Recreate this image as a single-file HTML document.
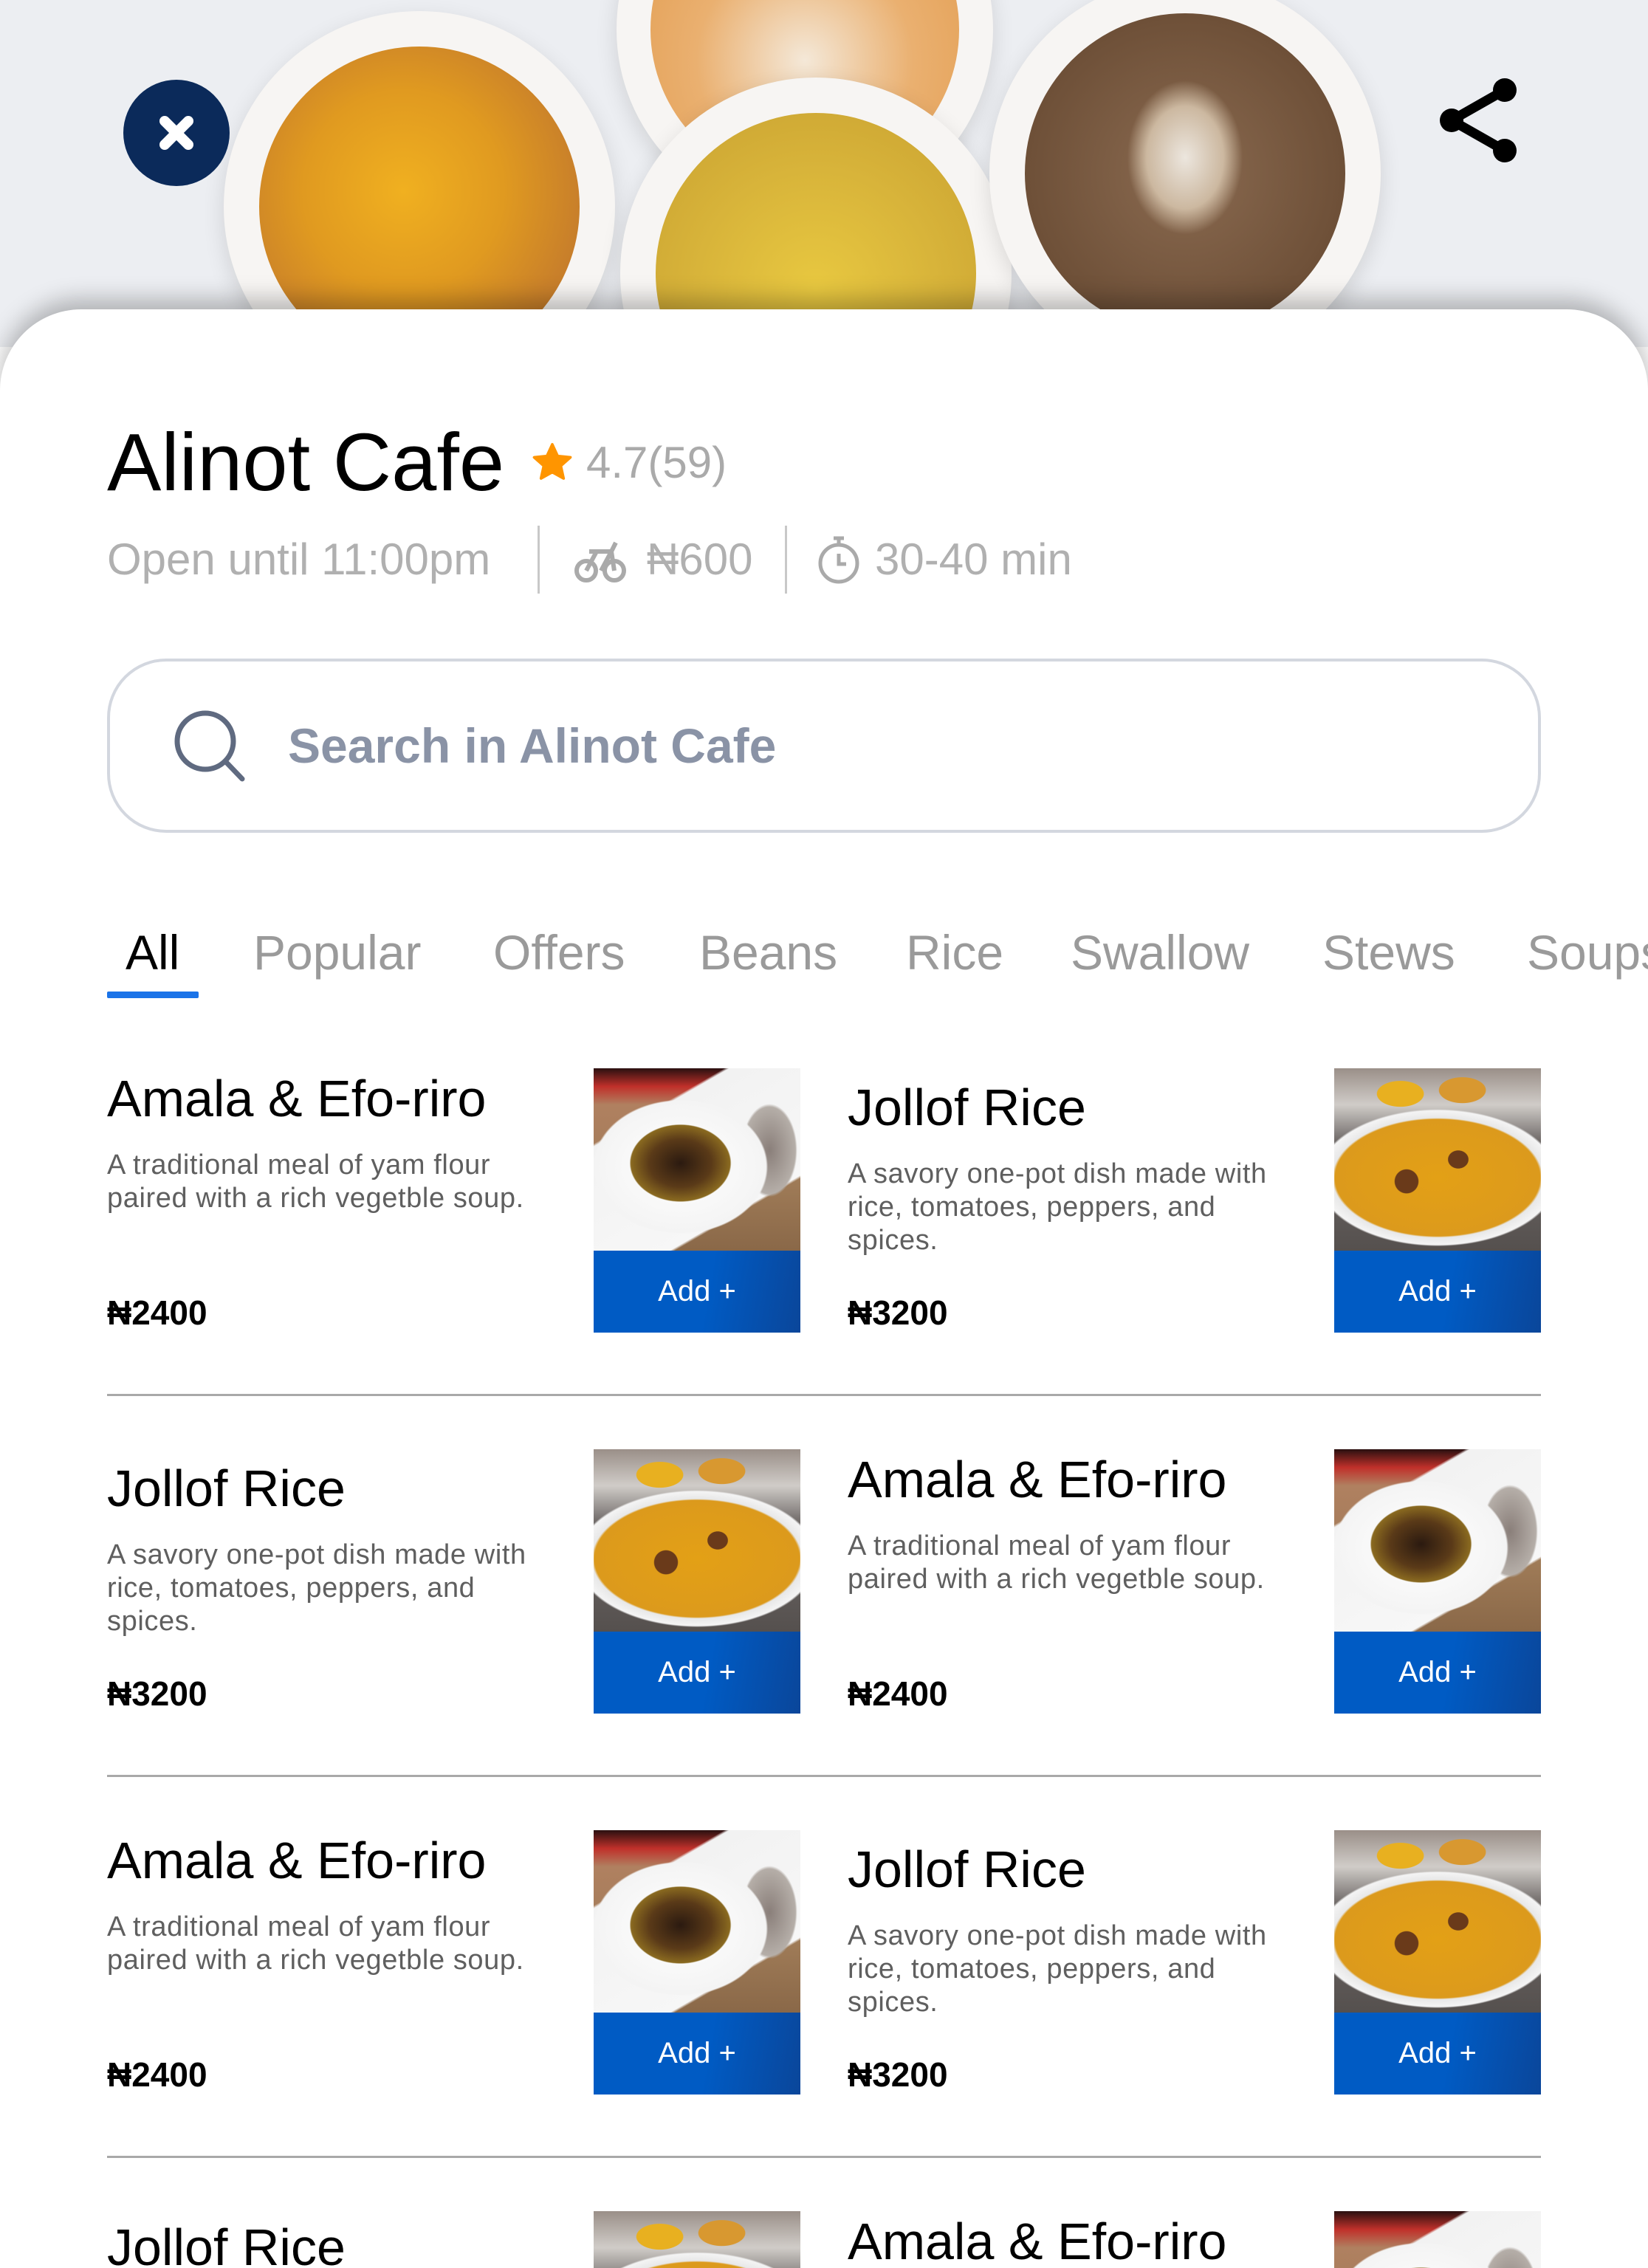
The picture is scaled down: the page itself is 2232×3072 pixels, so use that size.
<!DOCTYPE html>
<html style="overflow:hidden;height:3072px"><head><meta charset="utf-8"><style>
*{margin:0;padding:0;box-sizing:border-box}
html,body{width:2232px;height:3072px;overflow:hidden}
body{background:#fff;font-family:"Liberation Sans",sans-serif;position:relative}
#wrap{position:absolute;left:0;top:0;width:2232px;height:3072px;overflow:hidden}
.hero{position:absolute;left:0;top:0;width:2232px;height:470px;background:#eceef2;overflow:hidden}
.bowl{position:absolute;border-radius:50%;background:#f7f5f3;box-shadow:0 10px 30px rgba(0,0,0,.12)}
.bowl i{position:absolute;left:9%;top:9%;width:82%;height:82%;border-radius:50%}
.sheet{position:absolute;left:0;top:419px;width:2232px;height:2653px;background:#fff;border-radius:110px 110px 0 0;box-shadow:0 -14px 30px rgba(0,0,0,.25)}
.close{position:absolute;left:167px;top:108px;width:144px;height:144px;border-radius:50%;background:#0b2a5a}
.abs{position:absolute;white-space:nowrap}
.tab{position:absolute;top:1255px;font-size:66px;color:#9a9a9a;line-height:70px}
.img{position:absolute;width:280px;height:247px;overflow:hidden;background-size:280px 247px!important;background-repeat:no-repeat!important}
.amala{background:
 radial-gradient(ellipse 30% 26% at 42% 52%,#2b1a10 0,#5a3a18 50%,#8a6a20 80%,transparent 82%),
 radial-gradient(ellipse 46% 40% at 42% 54%,#fff 0,#f4f4f4 90%,transparent 92%),
 radial-gradient(ellipse 18% 34% at 85% 45%,#8a7f7a 0,#b5aea8 70%,transparent 75%),
 linear-gradient(150deg,transparent 25%,#f2f2f2 26%,#f7f7f7 75%,transparent 76%),
 linear-gradient(180deg,#2a1010 0,#c0302a 10%,#b08060 20%,#a07c58 60%,#8a6848 100%)}
.jollof{background:
 radial-gradient(ellipse 16% 10% at 32% 14%,#e8b020 0,#e8b020 70%,transparent 72%),
 radial-gradient(ellipse 16% 10% at 62% 12%,#d89830 0,#d89830 70%,transparent 72%),
 radial-gradient(ellipse 6% 6% at 60% 50%,#6a3a1a 0,#6a3a1a 80%,transparent 85%),
 radial-gradient(ellipse 7% 8% at 35% 62%,#6a3a1a 0,#6a3a1a 80%,transparent 85%),
 radial-gradient(ellipse 62% 40% at 50% 60%,#e3a016 0,#dc9a1c 80%,#e8e8e8 82%,#f4f4f4 92%,transparent 94%),
 linear-gradient(180deg,#9a8f88 0,#d0ccc8 20%,#6f6a68 40%,#55504e 100%)}
.btn{position:absolute;width:280px;height:111px;background:linear-gradient(100deg,#005bc4 0,#005bc4 55%,#0a469a 100%);color:#fff;font-size:40px;text-align:center;line-height:111px}
.t{position:absolute;font-size:70px;line-height:80px;color:#000;white-space:nowrap}
.d{position:absolute;font-size:38px;line-height:45px;color:#5f5f5f;width:640px;letter-spacing:.6px}
.p{position:absolute;font-size:46px;line-height:56px;font-weight:bold;color:#000}
.hr{position:absolute;left:145px;width:1942px;height:3px;background:#a9a9a9}
</style></head><body><div id="wrap">
<div class="hero">
 <div class="bowl" style="left:303px;top:15px;width:530px;height:530px"><i style="background:radial-gradient(circle at 45% 45%,#f0b020 0,#e09a20 40%,#c9802a 70%,#b86a28 100%)"></i></div>
 <div class="bowl" style="left:835px;top:-215px;width:510px;height:510px"><i style="background:radial-gradient(circle at 50% 60%,#f4e8d8 0,#eab070 45%,#e09848 100%)"></i></div>
 <div class="bowl" style="left:840px;top:105px;width:530px;height:530px"><i style="background:radial-gradient(circle at 50% 55%,#e8c840 0,#d8b43a 50%,#c8a030 100%)"></i></div>
 <div class="bowl" style="left:1340px;top:-30px;width:530px;height:530px"><i style="background:radial-gradient(ellipse 30% 40% at 50% 45%,#ece6de 0,#ccb8a0 40%,transparent 60%),radial-gradient(circle,#8a6a50 0,#6e5038 70%,#7a5a40 100%)"></i></div>
</div>
<div class="close"><svg width="144" height="144" viewBox="0 0 144 144"><path d="M56 56L88 88M88 56L56 88" stroke="#fff" stroke-width="14" stroke-linecap="round"/></svg></div>
<svg class="abs" style="left:1943px;top:102px" width="122" height="122" viewBox="0 0 122 122"><circle cx="95" cy="20" r="16" fill="#000"/><circle cx="23" cy="61" r="16" fill="#000"/><circle cx="95" cy="102" r="16" fill="#000"/><path d="M95 20L23 61L95 102" stroke="#000" stroke-width="13" fill="none"/></svg>
<div class="sheet"></div>
<div class="abs" style="left:145px;top:562px;font-size:110px;line-height:130px;color:#000">Alinot Cafe</div>
<svg class="abs" style="left:718px;top:597px" width="60" height="60" viewBox="0 0 24 24"><path d="M12 2l2.9 6.3 6.9.7-5.2 4.6 1.5 6.8L12 17l-6.1 3.4 1.5-6.8L2.2 9l6.9-.7z" fill="#ff9500" stroke="#ff9500" stroke-linejoin="round" stroke-width="1.5"/></svg>
<div class="abs" style="left:794px;top:592px;font-size:60px;line-height:70px;color:#aaa">4.7(59)</div>
<div class="abs" style="left:145px;top:723px;font-size:60px;line-height:70px;color:#b0b0b0">Open until 11:00pm</div>
<div class="abs" style="left:728px;top:712px;width:3px;height:92px;background:#c8c8c8"></div>
<svg class="abs" style="left:778px;top:725px" width="70" height="66" viewBox="0 0 70 66"><g fill="none" stroke="#aaa" stroke-width="6"><circle cx="16" cy="48" r="13"/><circle cx="54" cy="48" r="13"/><path d="M16 48L30 22H50L54 48M36 48L50 22M20 22h16M50 22l6-12"/></g></svg>
<div class="abs" style="left:876px;top:723px;font-size:60px;line-height:70px;color:#b0b0b0">₦600</div>
<div class="abs" style="left:1063px;top:712px;width:3px;height:92px;background:#c8c8c8"></div>
<svg class="abs" style="left:1105px;top:724px" width="62" height="68" viewBox="0 0 62 68"><g fill="none" stroke="#aaa" stroke-width="5"><circle cx="31" cy="39" r="25"/><path d="M24 5h14M31 5v9M31 26v14h10"/></g></svg>
<div class="abs" style="left:1185px;top:723px;font-size:60px;line-height:70px;color:#b0b0b0">30-40 min</div>
<div class="abs" style="left:145px;top:892px;width:1942px;height:236px;border:4px solid #d3d7df;border-radius:80px"></div>
<svg class="abs" style="left:234px;top:960px" width="100" height="100" viewBox="0 0 100 100"><circle cx="44" cy="44" r="38" fill="none" stroke="#5f6a80" stroke-width="7"/><path d="M71 71L94 95" stroke="#5f6a80" stroke-width="7" stroke-linecap="round"/></svg>
<div class="abs" style="left:390px;top:970px;font-size:66px;line-height:80px;color:#8a93a6;font-weight:bold">Search in Alinot Cafe</div>
<div class="tab" style="left:170px;color:#000">All</div>
<div class="abs" style="left:145px;top:1343px;width:124px;height:9px;background:#1a73e8;border-radius:2px"></div>
<div class="tab" style="left:343px">Popular</div>
<div class="tab" style="left:668px">Offers</div>
<div class="tab" style="left:947px">Beans</div>
<div class="tab" style="left:1227px">Rice</div>
<div class="tab" style="left:1450px">Swallow</div>
<div class="tab" style="left:1791px">Stews</div>
<div class="tab" style="left:2068px">Soups</div>

<div class="t" style="left:145px;top:1448px">Amala &amp; Efo-riro</div>
<div class="d" style="left:145px;top:1556px">A traditional meal of yam flour<br>paired with a rich vegetble soup.</div>
<div class="p" style="left:145px;top:1750px">₦2400</div>
<div class="img amala" style="left:804px;top:1447px"></div><div class="btn" style="left:804px;top:1694px">Add +</div>
<div class="t" style="left:1148px;top:1460px">Jollof Rice</div>
<div class="d" style="left:1148px;top:1568px">A savory one-pot dish made with<br>rice, tomatoes, peppers, and<br>spices.</div>
<div class="p" style="left:1148px;top:1750px">₦3200</div>
<div class="img jollof" style="left:1807px;top:1447px"></div><div class="btn" style="left:1807px;top:1694px">Add +</div>
<div class="hr" style="top:1888px"></div>

<div class="t" style="left:145px;top:1976px">Jollof Rice</div>
<div class="d" style="left:145px;top:2084px">A savory one-pot dish made with<br>rice, tomatoes, peppers, and<br>spices.</div>
<div class="p" style="left:145px;top:2266px">₦3200</div>
<div class="img jollof" style="left:804px;top:1963px"></div><div class="btn" style="left:804px;top:2210px">Add +</div>
<div class="t" style="left:1148px;top:1964px">Amala &amp; Efo-riro</div>
<div class="d" style="left:1148px;top:2072px">A traditional meal of yam flour<br>paired with a rich vegetble soup.</div>
<div class="p" style="left:1148px;top:2266px">₦2400</div>
<div class="img amala" style="left:1807px;top:1963px"></div><div class="btn" style="left:1807px;top:2210px">Add +</div>
<div class="hr" style="top:2404px"></div>

<div class="t" style="left:145px;top:2480px">Amala &amp; Efo-riro</div>
<div class="d" style="left:145px;top:2588px">A traditional meal of yam flour<br>paired with a rich vegetble soup.</div>
<div class="p" style="left:145px;top:2782px">₦2400</div>
<div class="img amala" style="left:804px;top:2479px"></div><div class="btn" style="left:804px;top:2726px">Add +</div>
<div class="t" style="left:1148px;top:2492px">Jollof Rice</div>
<div class="d" style="left:1148px;top:2600px">A savory one-pot dish made with<br>rice, tomatoes, peppers, and<br>spices.</div>
<div class="p" style="left:1148px;top:2782px">₦3200</div>
<div class="img jollof" style="left:1807px;top:2479px"></div><div class="btn" style="left:1807px;top:2726px">Add +</div>
<div class="hr" style="top:2920px"></div>

<div class="t" style="left:145px;top:3016px;line-height:56px">Jollof Rice</div>
<div class="img jollof" style="left:804px;top:2995px;height:77px"></div>
<div class="t" style="left:1148px;top:3008px;line-height:56px">Amala &amp; Efo-riro</div>
<div class="img amala" style="left:1807px;top:2995px;height:77px"></div>
</div></body></html>
